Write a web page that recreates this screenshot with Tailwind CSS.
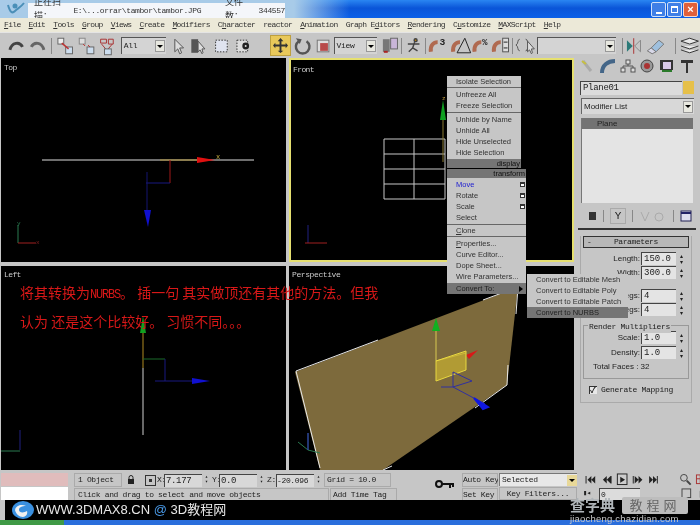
<!DOCTYPE html>
<html lang="en">
<head>
  <meta charset="UTF-8" />
  <title>3ds Max</title>
  <script src="https://cdn.jsdelivr.net/npm/@tailwindcss/browser@4"></script>
</head>
<body class="bg-[#c8c8c8]">
  <div class="relative w-[700px] h-[525px] overflow-hidden flex flex-col bg-[#c6c6c6] font-['Liberation_Mono','Noto_Sans_CJK_SC',monospace] text-[8px] text-[#222] blur-[0.3px]">

    <!-- title bar -->
    <div class="h-[18px] shrink-0 flex items-center bg-[linear-gradient(90deg,#a8cbe8_0%,#a8cbe8_42%,#a8cbe800_50%),linear-gradient(180deg,#2a86f2,#0a55d8_45%,#0b60e8)]">
      <svg class="w-[20px] h-[16px] ml-[6px]" viewBox="0 0 20 16" fill="none" stroke="#4a8fb8" stroke-width="2"><path d="M2 4c2 7 4 9 7 6s5-3 9-8"/><circle cx="9" cy="5" r="1.5" fill="#4a8fb8"/></svg>
      <div class="ml-[2px] mt-[3px] w-[257px] h-[15px] bg-[#f4f6fa] flex items-center pl-[6px] text-[8px] tracking-[-0.4px] text-[#333]">
        <span class="text-[9px] tracking-normal">正在扫描：</span><span>E:\...orrar\tambor\tambor.JPG</span>
        <span class="ml-[24px] text-[9px] tracking-normal">文件数：</span><span class="ml-[2px]">344557</span>
      </div>
      <div class="ml-auto mr-[2px] flex gap-[1px]">
        <div class="w-[15px] h-[15px] rounded-[2px] bg-[#3f7fe6] border border-[#cfe0f8] flex items-end justify-center pb-[2px]"><div class="w-[6px] h-[2px] bg-white"></div></div>
        <div class="w-[15px] h-[15px] rounded-[2px] bg-[#3f7fe6] border border-[#cfe0f8] flex items-center justify-center"><div class="w-[7px] h-[7px] border border-white border-t-2"></div></div>
        <div class="w-[15px] h-[15px] rounded-[2px] bg-[#e0603a] border border-[#f5d8cc] flex items-center justify-center text-white text-[11px] leading-none font-['Liberation_Sans',sans-serif] font-bold">×</div>
      </div>
    </div>

    <!-- menu bar -->
    <div class="h-[14px] shrink-0 bg-[#ece9d8] flex items-center gap-2 pl-[4px] tracking-[-0.65px] text-[#333]">
      <span><u>F</u>ile</span><span><u>E</u>dit</span><span><u>T</u>ools</span><span><u>G</u>roup</span><span><u>V</u>iews</span><span><u>C</u>reate</span><span><u>M</u>odifiers</span><span>C<u>h</u>aracter</span><span>reactor</span><span><u>A</u>nimation</span><span>Graph E<u>d</u>itors</span><span><u>R</u>endering</span><span>C<u>u</u>stomize</span><span><u>M</u>AXScript</span><span><u>H</u>elp</span>
    </div>

    <!-- main toolbar -->
    <div class="h-[26px] shrink-0 flex items-center bg-[#c6c6c6] border-t border-[#e4e4e4] pl-[7px]">
      <svg class="w-[42px] h-[18px]" viewBox="0 0 42 18" fill="none" stroke="#444" stroke-width="3"><path d="M3 13c2-8 10-9 13-3"/><path d="M25 10c3-6 11-5 13 3" stroke="#666"/></svg>
      <div class="w-px h-[16px] bg-[#888] ml-[3px]"></div>
      <svg class="w-[66px] h-[20px] ml-[3px]" viewBox="0 0 66 20" fill="none" stroke-width="1"><rect x="3" y="2" width="6" height="6" fill="#eee" stroke="#666"/><rect x="11" y="11" width="7" height="7" fill="#cde" stroke="#666"/><path d="M7 7l7 6" stroke="#b33" stroke-width="1.5"/><rect x="25" y="2" width="6" height="6" fill="#ddd" stroke="#888"/><rect x="33" y="11" width="7" height="7" fill="#cde" stroke="#666"/><path d="M29 8l2 2M34 9l2 2" stroke="#b33"/><path d="M47 3h6v4h-6zM55 3h5v5h-5z" stroke="#a33"/><path d="M48 8l5 6M59 8l-5 6" stroke="#a33"/><rect x="51" y="13" width="7" height="6" fill="#cde" stroke="#666"/></svg>
      <div class="w-[46px] h-[17px] ml-[2px] bg-[#d4d4d4] border-t border-l border-[#555] flex items-center justify-between pl-[2px] text-[8px] tracking-[-0.3px]">All<div class="w-[10px] h-[12px] mr-[1px] bg-[#e8e8e0] border border-[#999] flex items-center justify-center"><div class="border-x-[3px] border-x-transparent border-t-[3px] border-t-black"></div></div></div>
      <svg class="w-[110px] h-[20px] ml-[3px]" viewBox="0 0 110 20" fill="none"><path d="M6 3v13l3-3 2 5 2-1-2-5h4z" fill="#ddd" stroke="#555"/><rect x="23" y="3" width="7" height="14" fill="#555"/><path d="M30 5v11l2-2 2 4 1-1-1-4h3z" fill="#ddd" stroke="#555"/><rect x="48" y="4" width="12" height="12" fill="#dfe3ef" stroke="#333" stroke-dasharray="1.5 1.5"/><rect x="70" y="4" width="11" height="12" fill="#ddd" stroke="#333" stroke-dasharray="1.5 1.5"/><circle cx="79" cy="10" r="3.5" fill="#222"/><circle cx="79" cy="10" r="1" fill="#ddd"/></svg>
      <div class="w-[21px] h-[21px] -ml-[5px] bg-[#e8c85a] border border-[#bda040] flex items-center justify-center"><svg class="w-[15px] h-[15px]" viewBox="0 0 16 16" fill="#333"><path d="M8 0l3 3.500H9V7h4.500V5L16 8l-2.500 3V9H9v4.500h2L8 16l-3-2.500h2V9H2.500v2L0 8l2.500-3v2H7V3.500H5z"/></svg></div>
      <svg class="w-[42px] h-[20px] ml-[1px]" viewBox="0 0 42 20" fill="none"><path d="M15 5a7 7 0 1 1-8 0" stroke="#555" stroke-width="2.500"/><path d="M4 2l6 1-2 5z" fill="#555"/><rect x="26" y="4" width="12" height="12" fill="#ddd" stroke="#777"/><rect x="29" y="7" width="8" height="8" fill="#b84a4a"/></svg>
      <div class="w-[45px] h-[17px] ml-[1px] bg-[#d4d4d4] border-t border-l border-[#555] flex items-center justify-between pl-[2px] tracking-[-0.3px]">View<div class="w-[10px] h-[12px] mr-[1px] bg-[#e8e8e0] border border-[#999] flex items-center justify-center"><div class="border-x-[3px] border-x-transparent border-t-[3px] border-t-black"></div></div></div>
      <svg class="w-[22px] h-[20px] ml-[2px]" viewBox="0 0 22 20"><rect x="4" y="3" width="7" height="13" fill="#777"/><rect x="12" y="2" width="7" height="11" fill="#c9b6d8" stroke="#666"/><rect x="5" y="15" width="4" height="2" fill="#a22"/></svg>
      <div class="w-px h-[16px] bg-[#888]"></div>
      <svg class="w-[24px] h-[20px]" viewBox="0 0 24 20" fill="none" stroke="#444" stroke-width="1.500"><circle cx="14" cy="4" r="1.500" fill="#c80"/><path d="M13 6l-2 6-4 4M11 12l5 3M6 8h12"/></svg>
      <div class="w-px h-[16px] bg-[#888]"></div>
      <svg class="w-[88px] h-[22px]" viewBox="0 0 88 22" fill="none"><g stroke="#b06a50" stroke-width="4"><path d="M5 17c-1-7 3-10 7-10"/><path d="M28 17c-1-7 3-10 7-10"/><path d="M50 17c-1-7 3-10 7-10"/><path d="M70 17c-1-7 3-10 7-10"/></g><text x="14" y="10" font-size="10" font-weight="bold" fill="#222">3</text><path d="M32 18L40 3l6 15z" stroke="#222"/><text x="58" y="10" font-size="9" font-weight="bold" fill="#222">%</text><rect x="79" y="3" width="6" height="14" fill="#ddd" stroke="#555"/><path d="M80 7h4M80 13h4" stroke="#222"/></svg>
      <div class="w-px h-[16px] bg-[#888] ml-[1px]"></div>
      <svg class="w-[24px] h-[20px]" viewBox="0 0 24 20" fill="none" stroke="#555"><path d="M7 3C4 3 6 8 3 9c3 1 1 6 4 6M13 3c3 0 1 5 4 6-3 1-1 6-4 6"/><path d="M15 5v11l2-2 2 4 1-1-1-4h3z" fill="#ddd"/></svg>
      <div class="w-[82px] h-[17px] bg-[#d4d4d4] border-t border-l border-[#555] flex items-center justify-end"><div class="w-[10px] h-[12px] mr-[1px] bg-[#e8e8e0] border border-[#999] flex items-center justify-center"><div class="border-x-[3px] border-x-transparent border-t-[3px] border-t-black"></div></div></div>
      <div class="w-px h-[16px] bg-[#888] ml-[6px]"></div>
      <svg class="w-[52px] h-[20px] ml-[1px]" viewBox="0 0 52 20" fill="none"><path d="M3 4v12l6-6z" fill="#2b7a78"/><path d="M10 2v16" stroke="#a33"/><path d="M17 4v12l-6-6z" stroke="#888"/><path d="M28 12l8-8 5 4-8 8z" fill="#9fc0de" stroke="#777"/><path d="M24 15l4-3 5 4-4 2z" fill="#d8d8e8" stroke="#777"/></svg>
      <div class="w-px h-[16px] bg-[#888]"></div>
      <svg class="w-[22px] h-[20px] ml-[3px]" viewBox="0 0 22 20" fill="#e8e8e8" stroke="#333"><path d="M2 5l9-3 9 3-9 3z"/><path d="M2 10l9 3 9-3"/><path d="M2 14l9 3 9-3"/></svg>
    </div>

    <!-- viewports and command panel -->
    <div class="h-[412px] shrink-0 flex">
      <div class="w-[575px] shrink-0 grid grid-cols-[285px_285px] grid-rows-[204px_204px] gap-x-[3px] gap-y-[4px] pl-[1px]">

        <div class="relative bg-black">
          <span class="absolute left-[3px] top-[4px] text-[#ccc] tracking-[-0.6px]">Top</span>
          <svg class="size-full" viewBox="1 58 285 204" fill="none">
            <path d="M42 160H254" stroke="#ddd"/>
            <path d="M160 160H200" stroke="#a88c30"/>
            <path d="M197 157l18 3-18 3z" fill="#e01010"/>
            <path d="M170 160v23" stroke="#a01818"/>
            <path d="M146 183h24" stroke="#181880"/>
            <path d="M147 172v40" stroke="#141470"/>
            <path d="M144 210h7l-3 17z" fill="#1010d0"/>
            <text x="216" y="159" font-size="7" fill="#c8b040">x</text>
            <path d="M18 225v18" stroke="#2a7a50"/>
            <path d="M18 243h18" stroke="#a02020"/>
            <text x="17" y="225" font-size="6" fill="#2a7a50">y</text>
            <text x="36" y="244" font-size="6" fill="#802020">x</text>
          </svg>
        </div>

        <div class="relative bg-black border-2 border-[#e6e070]">
          <span class="absolute left-[2px] top-[4px] text-[#ccc] tracking-[-0.6px]">Front</span>
          <svg class="size-full" viewBox="291 60 281 200" fill="none">
            <path d="M384 139h61M384 154h61M384 169h61M384 184h61M384 199h61M384 139v60M414 139v60M445 139v60" stroke="#c8c8c8"/>
            <path d="M443 120v42" stroke="#8a7a30"/>
            <path d="M443 100l3 20h-6z" fill="#10a020"/>
            <text x="442" y="100" font-size="6" fill="#c8a040">z</text>
            <path d="M308 225v18" stroke="#202080"/>
            <path d="M305 243h22" stroke="#a02020"/>
          </svg>
        </div>

        <div class="relative bg-black">
          <span class="absolute left-[3px] top-[3px] text-[#ccc] tracking-[-0.6px]">Left</span>
          <svg class="size-full" viewBox="1 266 285 204" fill="none">
            <path d="M143 368v67" stroke="#d0d0d0"/>
            <path d="M143 328v40" stroke="#b08a20"/>
            <path d="M143 316l3 17h-6z" fill="#10a020"/>
            <path d="M143 359h22" stroke="#1a6a2a"/>
            <path d="M165 359v22" stroke="#181880"/>
            <path d="M155 381h40" stroke="#181880"/>
            <path d="M192 378l18 3-18 3z" fill="#1010d0"/>
            <path d="M20 430v20" stroke="#202080"/>
            <path d="M1 451h19" stroke="#2a7a50"/>
          </svg>
        </div>

        <div class="relative bg-black">
          <span class="absolute left-[3px] top-[3px] text-[#ccc] tracking-[-0.4px]">Perspective</span>
          <svg class="size-full" viewBox="289 266 285 204" fill="none">
            <path d="M295 372L518 287L507 385L383 470H320Z" fill="#7d6a3c"/>
            <path d="M320 468L296 371L378 340M483 300L518 287L516 314M508 365L507 385L475 408M392 466L383 470" stroke="#e8e8e8"/>
            <path d="M436 361v-30" stroke="#d8c850"/>
            <path d="M436 318l4 13h-8z" fill="#10b020"/>
            <path d="M436 361l30 -8" stroke="#d8c850"/>
            <path d="M466 355l12-5-9 9z" fill="#d81818"/>
            <path d="M436 361l30-10v19l-30 11z" fill="#c8b030" fill-opacity="0.7" stroke="#e8d840"/>
            <path d="M453 372v15l-12 0M453 387l32 17M453 372l19 9-19 6" stroke="#3030a0"/>
            <path d="M474 398l14 9-5 2z" fill="#1018e0" stroke="#1018e0" stroke-width="2"/>
            <path d="M308 450v-17M308 450l-10-8M308 450l12 3" stroke="#2a7a50"/>
            <path d="M308 450v-17" stroke="#3030c0"/>
          </svg>
        </div>
      </div>

      <!-- command panel -->
      <div class="w-[125px] shrink-0 flex flex-col bg-[#c6c6c6]">
        <div class="h-[16px] flex items-center justify-between px-[5px]">
          <svg class="w-[16px] h-[14px]" viewBox="0 0 16 14" fill="none"><path d="M3 2l8 10" stroke="#aaa" stroke-width="3"/><path d="M2 2l4 3" stroke="#c8c040" stroke-width="2"/></svg>
          <svg class="w-[16px] h-[14px]" viewBox="0 0 16 14" fill="none"><path d="M2 14C2 6 8 2 15 2" stroke="#446688" stroke-width="4"/></svg>
          <svg class="w-[16px] h-[14px]" viewBox="0 0 16 14" fill="#ddd" stroke="#555"><rect x="6" y="1" width="4" height="4"/><rect x="1" y="9" width="4" height="4"/><rect x="11" y="9" width="4" height="4"/><path d="M8 5v2M3 9V7h10v2" fill="none"/></svg>
          <svg class="w-[16px] h-[14px]" viewBox="0 0 16 14"><circle cx="8" cy="7" r="6" fill="#999" stroke="#444"/><circle cx="8" cy="7" r="3" fill="#a33"/></svg>
          <svg class="w-[16px] h-[14px]" viewBox="0 0 16 14"><rect x="1" y="1" width="13" height="10" fill="#333"/><rect x="4" y="3" width="8" height="7" fill="#d8c8e8"/><path d="M3 12h10" stroke="#2a7a2a" stroke-width="2"/></svg>
          <svg class="w-[16px] h-[14px]" viewBox="0 0 16 14" fill="#333"><path d="M2 1h12v3H9v10H7V4H2z"/></svg>
        </div>

        <div class="flex mt-[7px] pl-[5px] gap-[1px]">
          <div class="w-[102px] h-[14px] bg-[#dcdcdc] border-t border-l border-[#444] pl-[2px] text-[9px] leading-[13px] tracking-[-0.3px]">Plane01</div>
          <div class="w-[11px] h-[13px] bg-[#e6c04a]"></div>
        </div>

        <div class="mt-[3px] ml-[6px] w-[113px] h-[16px] bg-[#d8d8d8] border-t border-l border-[#666] flex items-center justify-between pl-[2px] font-['Liberation_Sans',sans-serif] text-[8px]">Modifier List
          <div class="w-[10px] h-[12px] mr-[1px] bg-[#e8e8e0] border border-[#999] flex items-center justify-center"><div class="border-x-[3px] border-x-transparent border-t-[3px] border-t-black"></div></div>
        </div>

        <div class="mt-[4px] ml-[6px] w-[112px] h-[85px] bg-[#e4e4e4] border-l border-[#777]">
          <div class="h-[11px] bg-[#737373] pl-[15px] font-['Liberation_Sans',sans-serif] text-[8px] leading-[11px] text-[#222]">Plane</div>
        </div>

        <div class="h-[16px] mt-[5px] ml-[8px] flex items-center gap-[6px]">
          <svg class="w-[14px] h-[12px]" viewBox="0 0 14 12" fill="#333"><path d="M1 6h5M6 2h7v8H6z"/></svg>
          <div class="w-px h-[12px] bg-[#888]"></div>
          <div class="w-[16px] h-[16px] border border-[#aaa] text-center text-[#222] text-[11px] leading-[14px]">Y</div>
          <div class="w-px h-[12px] bg-[#888]"></div>
          <svg class="w-[28px] h-[12px]" viewBox="0 0 28 12" fill="none" stroke="#aaa"><path d="M2 2l4 9 4-9"/><circle cx="20" cy="7" r="4"/></svg>
          <div class="w-px h-[12px] bg-[#888]"></div>
          <svg class="w-[12px] h-[12px]" viewBox="0 0 12 12"><rect x="1" y="1" width="10" height="10" fill="#dde" stroke="#225"/><path d="M1 3h10" stroke="#226" stroke-width="2"/></svg>
        </div>

        <div class="mt-[4px] ml-[3px] w-[118px] h-[2px] bg-[#333]"></div>

        <div class="mt-[6px] ml-[5px] w-[112px] h-[167px] border-b border-x border-[#aaa] px-[2px]">
          <div class="h-[12px] border border-[#333] bg-[#b8b8b8] flex items-center">
            <span class="pl-[3px]">-</span><span class="flex-1 text-center tracking-[-0.4px] pr-[8px]">Parameters</span>
          </div>

          <div class="mt-[4px] flex flex-col gap-[1px] font-['Liberation_Sans',sans-serif]">
            <div class="h-[13px] flex items-center justify-end">Length:<div class="ml-[1px] w-[35px] h-[13px] bg-[#e4e4e4] border-t border-l border-[#444] pl-[2px] font-['Liberation_Mono',monospace] text-[9px] leading-[12px]">150.0</div><span class="w-[13px] pl-[4px] text-[6px] leading-[6px]">▴<br />▾</span></div>
            <div class="h-[13px] flex items-center justify-end">Width:<div class="ml-[1px] w-[35px] h-[13px] bg-[#e4e4e4] border-t border-l border-[#444] pl-[2px] font-['Liberation_Mono',monospace] text-[9px] leading-[12px]">300.0</div><span class="w-[13px] pl-[4px] text-[6px] leading-[6px]">▴<br />▾</span></div>
            <div class="h-[13px] mt-[9px] flex items-center justify-end">Length Segs:<div class="ml-[1px] w-[35px] h-[13px] bg-[#e4e4e4] border-t border-l border-[#444] pl-[2px] font-['Liberation_Mono',monospace] text-[9px] leading-[12px]">4</div><span class="w-[13px] pl-[4px] text-[6px] leading-[6px]">▴<br />▾</span></div>
            <div class="h-[13px] flex items-center justify-end">Width Segs:<div class="ml-[1px] w-[35px] h-[13px] bg-[#e4e4e4] border-t border-l border-[#444] pl-[2px] font-['Liberation_Mono',monospace] text-[9px] leading-[12px]">4</div><span class="w-[13px] pl-[4px] text-[6px] leading-[6px]">▴<br />▾</span></div>
          </div>

          <div class="relative mt-[9px] h-[54px] border border-[#999] pt-[5px] font-['Liberation_Sans',sans-serif]">
            <span class="absolute -top-[5px] left-[4px] bg-[#c6c6c6] px-[1px] font-['Liberation_Mono',monospace] tracking-[-0.3px]">Render Multipliers</span>
            <div class="h-[13px] flex items-center justify-end -mr-[1px]">Scale:<div class="ml-[1px] w-[35px] h-[13px] bg-[#e4e4e4] border-t border-l border-[#444] pl-[2px] font-['Liberation_Mono',monospace] text-[9px] leading-[12px]">1.0</div><span class="w-[13px] pl-[4px] text-[6px] leading-[6px]">▴<br />▾</span></div>
            <div class="h-[13px] mt-[2px] flex items-center justify-end -mr-[1px]">Density:<div class="ml-[1px] w-[35px] h-[13px] bg-[#e4e4e4] border-t border-l border-[#444] pl-[2px] font-['Liberation_Mono',monospace] text-[9px] leading-[12px]">1.0</div><span class="w-[13px] pl-[4px] text-[6px] leading-[6px]">▴<br />▾</span></div>
            <div class="mt-[2px] pl-[9px]">Total Faces : 32</div>
          </div>

          <div class="mt-[5px] pl-[6px] flex items-center gap-[4px] tracking-[-0.3px]">
            <div class="w-[8px] h-[8px] bg-[#e8e8e8] border-t border-l border-[#333] text-[8px] leading-[8px] font-bold">✓</div>Generate Mapping
          </div>
        </div>
      </div>
    </div>

    <!-- status area -->
    <div class="h-[30px] shrink-0 flex pt-[3px] tracking-[-0.35px]">
      <div class="w-[67px] ml-[1px] shrink-0 flex flex-col gap-[1px]">
        <div class="h-[14px] bg-[#e0bcbc]"></div>
        <div class="h-[13px] bg-white"></div>
      </div>
      <div class="w-[6px] shrink-0"></div>
      <div class="w-[354px] shrink-0 flex flex-col gap-[1px]">
        <div class="h-[14px] flex items-center">
          <div class="w-[48px] pl-[3px] border border-[#aaa] h-[14px] leading-[12px]">1 Object</div>
          <svg class="w-[10px] h-[10px] ml-[4px]" viewBox="0 0 10 10"><path d="M3 4V2.500a2 2 0 0 1 4 0V4" fill="none" stroke="#222"/><rect x="2" y="4" width="6" height="5" fill="#222"/></svg>
          <div class="w-[11px] h-[11px] ml-[9px] border border-[#333] flex items-center justify-center"><div class="w-[3px] h-[3px] bg-[#333]"></div></div>
          <span class="ml-[1px] w-[7px] text-right">X:</span><div class="w-[38px] h-[13px] ml-[0px] bg-[#d8d8d8] border-t border-l border-[#444] pl-[1px] leading-[12px] text-[9px]">7.177</div><span class="w-[10px] pl-[3px] text-[5px] leading-[5px]">▴<br />▾</span>
          <span class="w-[7px]">Y:</span><div class="w-[38px] h-[13px] bg-[#d8d8d8] border-t border-l border-[#444] pl-[1px] leading-[12px] text-[9px]">0.0</div><span class="w-[10px] pl-[3px] text-[5px] leading-[5px]">▴<br />▾</span>
          <span class="w-[9px]">Z:</span><div class="w-[38px] h-[13px] bg-[#d8d8d8] border-t border-l border-[#444] leading-[12px] text-[8px]">-20.096</div><span class="w-[10px] pl-[3px] text-[5px] leading-[5px]">▴<br />▾</span>
          <div class="w-[67px] h-[14px] border border-[#aaa] pl-[2px] leading-[12px] text-[8px]">Grid = 10.0</div>
        </div>
        <div class="h-[13px] flex">
          <div class="w-[255px] h-[13px] border border-[#aaa] pl-[3px] leading-[11px]">Click and drag to select and move objects</div>
          <div class="w-[67px] h-[13px] ml-[1px] border border-[#aaa] pl-[2px] leading-[11px]">Add Time Tag</div>
        </div>
      </div>
      <svg class="w-[20px] h-[10px] ml-[7px] mt-[7px] shrink-0" viewBox="0 0 20 10" fill="none" stroke="#111" stroke-width="2"><circle cx="4" cy="4" r="3"/><path d="M7 4h12M15 4v4M18 4v3"/></svg>
      <div class="w-[36px] ml-[7px] shrink-0 flex flex-col gap-[1px] overflow-hidden">
        <div class="h-[14px] border border-[#aaa] leading-[12px] whitespace-nowrap">Auto Key</div>
        <div class="h-[13px] border border-[#aaa] leading-[11px] whitespace-nowrap">Set Key</div>
      </div>
      <div class="w-[78px] ml-[1px] shrink-0 flex flex-col gap-[1px]">
        <div class="h-[14px] bg-[#e8e8e8] border-t border-l border-[#777] flex items-center justify-between pl-[2px]">Selected<div class="w-[10px] h-[11px] bg-[#e8d898] flex items-center justify-center"><div class="border-x-[3px] border-x-transparent border-t-[3px] border-t-black"></div></div></div>
        <div class="h-[13px] border border-[#aaa] text-center leading-[11px]">Key Filters...</div>
      </div>
      <div class="w-[87px] ml-[6px] shrink-0 flex flex-col gap-[1px]">
        <svg class="h-[14px] w-[87px]" viewBox="0 0 87 14" fill="#222"><path d="M1 3h1v8H1zM3 7l4-4v8zM7 7l4-4v8zM19 7l4-4v8zM23 7l4-4v8zM27 3h1v8h-1z"/><rect x="34" y="1" width="10" height="11" fill="#ccc" stroke="#222"/><path d="M37 4l5 3-5 3z"/><path d="M50 3h1v8h-1zM52 3l4 4-4 4zM56 3l4 4-4 4zM67 3l4 4-4 4zM71 3l4 4-4 4zM75 3h1v8h-1z"/></svg>
        <div class="h-[13px] flex items-center"><span class="w-[16px] text-[7px] leading-none">▮◂</span><div class="w-[41px] h-[12px] bg-[#dcdcdc] border-t border-l border-[#444] pl-[1px]">0</div></div>
      </div>
      <div class="ml-[8px] shrink-0 flex flex-col gap-[1px]">
        <svg class="w-[60px] h-[14px]" viewBox="0 0 60 14" fill="none"><circle cx="5" cy="5" r="3.500" stroke="#444"/><path d="M8 8l4 4" stroke="#444" stroke-width="2"/><rect x="18" y="2" width="9" height="9" stroke="#a33"/><path d="M22 2v9M18 6h9" stroke="#a33"/><rect x="33" y="2" width="9" height="9" stroke="#335"/><rect x="48" y="2" width="9" height="9" stroke="#a33"/><path d="M52 2v9M48 6h9" stroke="#335"/></svg>
        <svg class="w-[60px] h-[13px]" viewBox="0 0 60 13" fill="none" stroke="#444"><rect x="3" y="2" width="9" height="9"/><path d="M22 11V4M25 11V3M28 11V4"/><path d="M38 3l5 8h-9z"/><rect x="50" y="2" width="9" height="9"/></svg>
      </div>
    </div>

    <div class="flex-1 bg-[#c6c6c6]"></div>

    <!-- taskbar -->
    <div class="h-[5px] shrink-0 flex bg-[#2a6edc]">
      <div class="w-[64px] bg-[#3f9a46]"></div>
    </div>

    <!-- annotation text -->
    <div class="absolute left-[20px] top-[279px] font-['Noto_Sans_CJK_SC',sans-serif] text-[14px] leading-[26px] text-[#d81818] whitespace-pre">将其转换为<span class="font-['Liberation_Mono',monospace] text-[12px] tracking-[-1.200px]">NURBS</span>。 插一句 其实做顶还有其他的方法。但我
认为 还是这个比较好。 习惯不同。。。</div>

    <!-- viewport right-click quad menu -->
    <div class="absolute left-[447px] top-[76px] font-['Liberation_Sans',sans-serif] text-[7.500px] leading-[11px] text-[#333]">
      <div class="w-[74px] bg-[#c6c6c6] pl-[9px] border-b border-[#666]">Isolate Selection</div>
      <div class="w-[74px] bg-[#c6c6c6] pl-[9px] pt-[1px] pb-[1px] border-b border-[#666]">Unfreeze All<br />Freeze Selection</div>
      <div class="w-[74px] bg-[#c6c6c6] pl-[9px] py-[1px]">Unhide by Name<br />Unhide All<br />Hide Unselected<br />Hide Selection</div>
      <div class="w-[74px] h-[9px] bg-[#757575] text-right pr-[1px] leading-[9px] text-[#111]">display</div>
      <div class="w-[79px] h-[9px] mt-[1px] bg-[#757575] text-right pr-[1px] leading-[9px] text-[#111]">transform</div>
      <div class="w-[79px] bg-[#c6c6c6] pl-[9px] py-[1px] border-b border-[#666]">
        <div class="flex justify-between items-center pr-[1px] text-[#2020d0]">Move<div class="w-[5px] h-[5px] bg-white border border-[#333] border-t-2"></div></div>
        <div class="flex justify-between items-center pr-[1px]">Rotate<div class="w-[5px] h-[5px] bg-white border border-[#333] border-t-2"></div></div>
        <div class="flex justify-between items-center pr-[1px]">Scale<div class="w-[5px] h-[5px] bg-white border border-[#333] border-t-2"></div></div>
        <div>Select</div>
      </div>
      <div class="w-[79px] bg-[#c6c6c6] pl-[9px] border-b border-[#666]"><u>C</u>lone</div>
      <div class="w-[79px] bg-[#c6c6c6] pl-[9px] py-[1px]"><u>P</u>roperties...<br />Curve Editor...<br />Dope Sheet...<br />Wire Parameters...</div>
      <div class="w-[79px] h-[11px] bg-[#757575] pl-[9px] pr-[3px] flex items-center justify-between text-[#222]">Convert To:<div class="border-y-[3px] border-y-transparent border-l-[4px] border-l-black"></div></div>
    </div>
    <div class="absolute left-[527px] top-[274px] w-[101px] bg-[#c6c6c6] font-['Liberation_Sans',sans-serif] text-[7.500px] leading-[11px] text-[#333]">
      <div class="pl-[9px]">Convert to Editable Mesh</div>
      <div class="pl-[9px]">Convert to Editable Poly</div>
      <div class="pl-[9px]">Convert to Editable Patch</div>
      <div class="pl-[9px] bg-[#757575] text-[#222]">Convert to NURBS</div>
    </div>

    <!-- site watermark -->
    <div class="absolute left-[5px] right-0 top-[500px] h-[20px] bg-black flex items-center pl-[6px] font-['Liberation_Sans','Noto_Sans_CJK_SC',sans-serif] text-[13px] text-[#e8e8e8]">
      <svg class="w-[24px] h-[18px]" viewBox="0 0 24 18"><ellipse cx="12" cy="9" rx="11" ry="9" fill="#3a90e0"/><path d="M4 9c1-5 7-6 11-4-4 0-7 1-7 4s5 3 8 1c1 3-1 6-4 6-4 0-7-3-8-7z" fill="#f0f0f0"/></svg>
      <span class="ml-[1px]">WWW.3DMAX8.CN <span class="text-[#4a9ae8]">@</span> 3D教程网</span>
    </div>
    <div class="absolute left-[570px] top-[497px] w-[125px] font-['Liberation_Sans','Noto_Sans_CJK_SC',sans-serif]">
      <div class="flex items-center">
        <span class="w-[50px] text-[15px] leading-[17px] font-bold text-[#aeb4b8]">查字典</span>
        <span class="w-[66px] h-[17px] ml-[2px] rounded-[2px] bg-[#bdbdbd] text-center text-[13px] leading-[17px] tracking-[4px] text-[#666]">教程网</span>
      </div>
      <div class="text-[9.500px] leading-[10px] tracking-[0.2px] text-[#c8c8c8]">jiaocheng.chazidian.com</div>
    </div>
  </div>
</body>
</html>
